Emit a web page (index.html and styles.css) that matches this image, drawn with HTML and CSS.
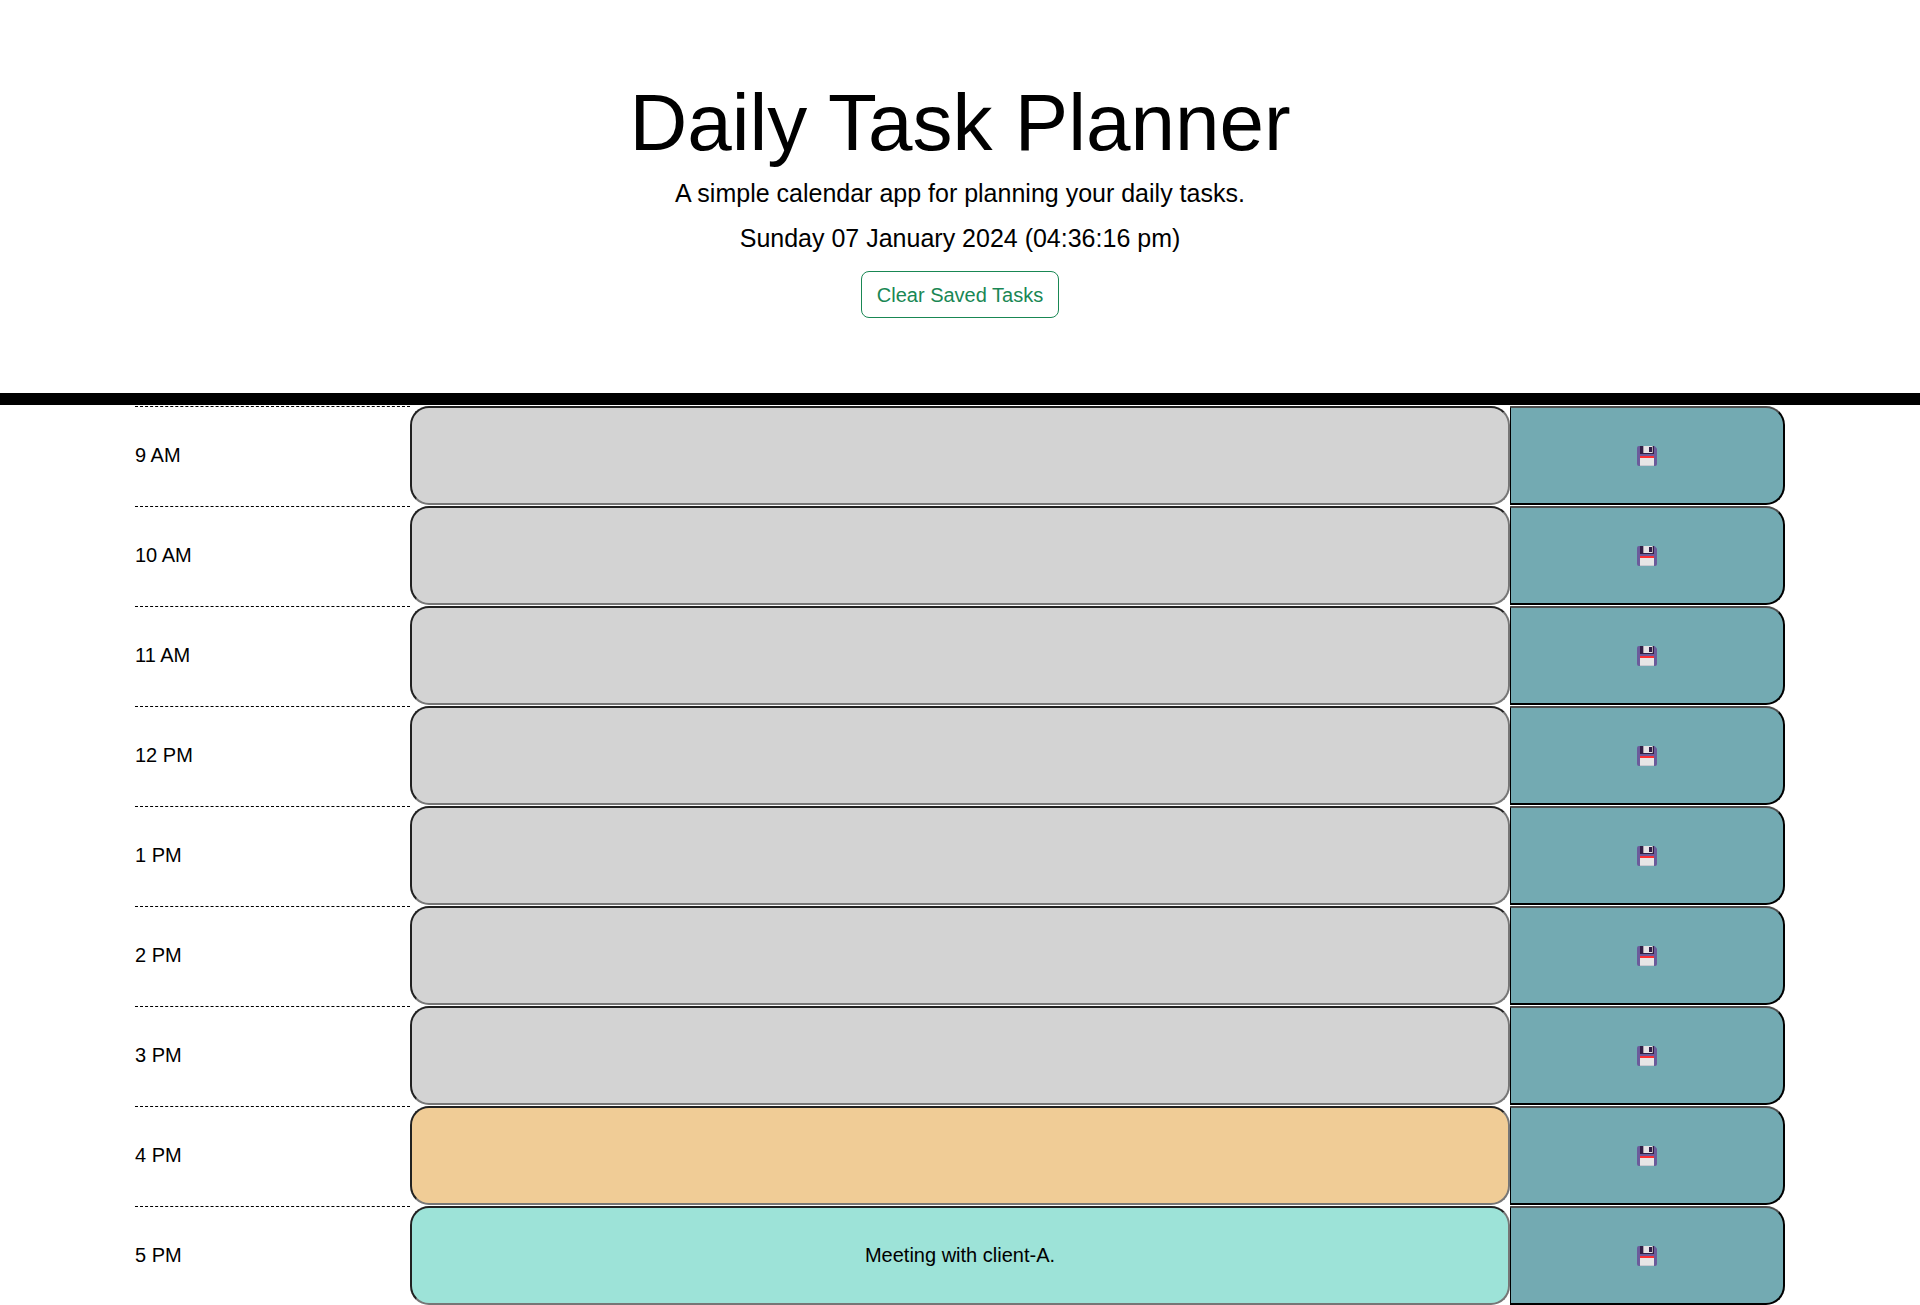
FILE: index.html
```html
<!DOCTYPE html>
<html lang="en">
<head>
  <meta charset="utf-8">
  <meta name="viewport" content="width=device-width, initial-scale=1">
  <title>Daily Task Planner</title>
  <link rel="stylesheet" href="styles.css">
</head>
<body>
  <svg class="symbols" aria-hidden="true">
    <symbol id="floppy" viewBox="0 0 20 20">
      <path fill="#6b5b9b" d="M2 0h15.500l2.500 2.500V18a2 2 0 0 1-2 2H2a2 2 0 0 1-2-2V2a2 2 0 0 1 2-2z"/>
      <path fill="#321f46" d="M3 0h14v8H3z"/>
      <path fill="#e6e2e6" d="M6 0h10v7H6z"/>
      <path fill="#aaa0ab" d="M6 0h1v7H6zM15 0h1v7h-1z"/>
      <path fill="#321f46" d="M12 1h3v5h-3z"/>
      <path fill="#fd3033" d="M3 10h14v2H3z"/>
      <path fill="#e6e6e6" d="M3 12h14v8H3z"/>
      <path fill="#cccad2" d="M3 19h14v1H3z"/>
    </symbol>
  </svg>

  <header class="hero">
    <h1 class="title">Daily Task Planner</h1>
    <p class="lead">A simple calendar app for planning your daily tasks.</p>
    <p class="lead">Sunday 07 January 2024 (04:36:16 pm)</p>
    <button class="clear" type="button">Clear Saved Tasks</button>
  </header>

  <main class="planner">
    <div class="row">
      <label class="hour" for="task-9">9 AM</label>
      <textarea class="task past" id="task-9"></textarea>
      <button class="save" type="button" aria-label="Save 9 AM"><svg class="icon"><use href="#floppy"/></svg></button>
    </div>
    <div class="row">
      <label class="hour" for="task-10">10 AM</label>
      <textarea class="task past" id="task-10"></textarea>
      <button class="save" type="button" aria-label="Save 10 AM"><svg class="icon"><use href="#floppy"/></svg></button>
    </div>
    <div class="row">
      <label class="hour" for="task-11">11 AM</label>
      <textarea class="task past" id="task-11"></textarea>
      <button class="save" type="button" aria-label="Save 11 AM"><svg class="icon"><use href="#floppy"/></svg></button>
    </div>
    <div class="row">
      <label class="hour" for="task-12">12 PM</label>
      <textarea class="task past" id="task-12"></textarea>
      <button class="save" type="button" aria-label="Save 12 PM"><svg class="icon"><use href="#floppy"/></svg></button>
    </div>
    <div class="row">
      <label class="hour" for="task-13">1 PM</label>
      <textarea class="task past" id="task-13"></textarea>
      <button class="save" type="button" aria-label="Save 1 PM"><svg class="icon"><use href="#floppy"/></svg></button>
    </div>
    <div class="row">
      <label class="hour" for="task-14">2 PM</label>
      <textarea class="task past" id="task-14"></textarea>
      <button class="save" type="button" aria-label="Save 2 PM"><svg class="icon"><use href="#floppy"/></svg></button>
    </div>
    <div class="row">
      <label class="hour" for="task-15">3 PM</label>
      <textarea class="task past" id="task-15"></textarea>
      <button class="save" type="button" aria-label="Save 3 PM"><svg class="icon"><use href="#floppy"/></svg></button>
    </div>
    <div class="row">
      <label class="hour" for="task-16">4 PM</label>
      <textarea class="task present" id="task-16"></textarea>
      <button class="save" type="button" aria-label="Save 4 PM"><svg class="icon"><use href="#floppy"/></svg></button>
    </div>
    <div class="row">
      <label class="hour" for="task-17">5 PM</label>
      <textarea class="task future" id="task-17">Meeting with client-A.</textarea>
      <button class="save" type="button" aria-label="Save 5 PM"><svg class="icon"><use href="#floppy"/></svg></button>
    </div>
  </main>
</body>
</html>
```

FILE: styles.css
```css
* {
  box-sizing: border-box;
}

body {
  margin: 0;
  background: #fff;
  color: #000;
  font-family: "Liberation Sans", Arial, sans-serif;
  font-size: 20px;
  line-height: 30px;
}

button,
textarea {
  font: inherit;
  color: inherit;
}

.symbols {
  display: none;
}

/* Header */
.hero {
  display: flex;
  flex-direction: column;
  align-items: center;
  gap: 8px;
  padding: 79px 24px 75px;
  border-bottom: 12px solid #000;
  text-align: center;
}

.title {
  margin: 0;
  font-size: 80px;
  font-weight: 400;
  line-height: 88px;
}

.lead {
  margin: 0;
  font-size: 25px;
  line-height: 37px;
}

.clear {
  margin-top: 6px;
  padding: 8px 15px 7px;
  border: 1px solid #198754;
  border-radius: 8px;
  background: transparent;
  color: #198754;
  cursor: pointer;
}

/* Time blocks */
.planner {
  display: grid;
  gap: 1px;
  max-width: 1650px;
  margin: 0 auto;
  padding-top: 1px;
}

.row {
  display: grid;
  grid-template-columns: 1fr 4fr 1fr;
}

.hour {
  display: flex;
  align-items: center;
  padding-bottom: 2px;
  border-top: 1px dashed #000;
}

.task {
  display: block;
  width: 100%;
  height: 99px;
  margin: 0;
  padding: 32px 16px;
  border: 2px solid;
  border-color: #212121 #767676 #767676 #212121;
  border-radius: 19px;
  outline: 0;
  overflow: hidden;
  resize: none;
  text-align: center;
}

.past {
  background: #d3d3d3;
}

.present {
  background: #f0cc96;
}

.future {
  background: #9de3d8;
}

.save {
  display: flex;
  align-items: center;
  justify-content: center;
  padding: 0;
  border: 2px solid;
  border-left-width: 1px;
  border-color: #4c4c4c #000 #000;
  border-radius: 0 19px 19px 0;
  background: #73aab2;
  cursor: pointer;
}

.icon {
  width: 20px;
  height: 20px;
}
```
